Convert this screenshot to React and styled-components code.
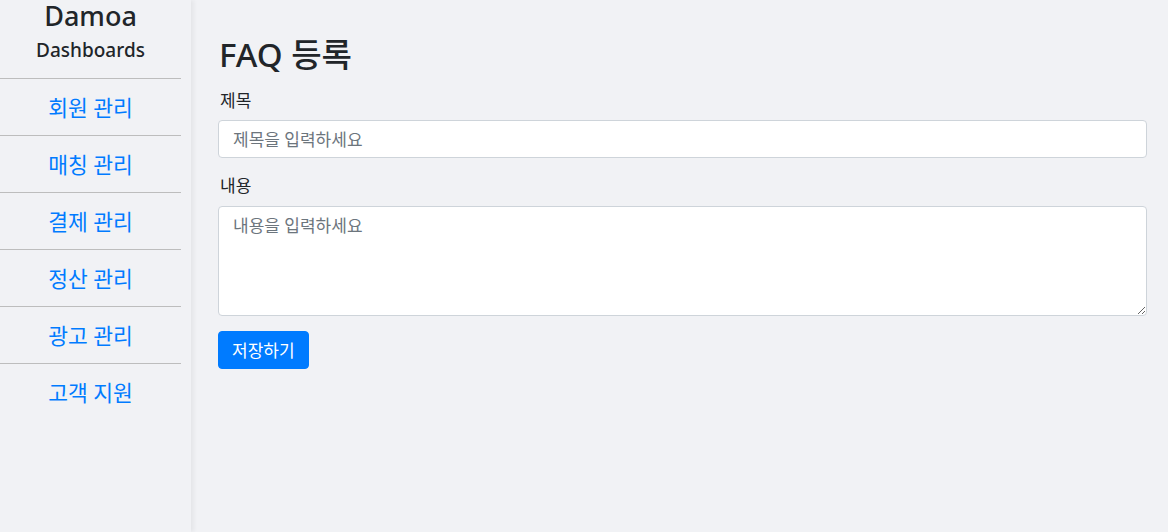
import React, { useState } from 'react';
import styled, { createGlobalStyle } from 'styled-components';

const GlobalStyle = createGlobalStyle`
    html, body {
        margin: 0;
        padding: 0;
        background-color: #f1f2f5;
        font-family: "Noto Sans", "Noto Sans CJK KR", sans-serif;
        color: #212529;
    }
    * {
        box-sizing: border-box;
    }
`;

const menu_list = ['회원 관리', '매칭 관리', '결제 관리', '정산 관리', '광고 관리', '고객 지원'];

const App = () => {
    const [title, setTitle] = useState('');
    const [contents, setContents] = useState('');

    return (
        <>
            <GlobalStyle />
            <Layout>
                <Sidebar>
                    <Brand>
                        <h2>Damoa</h2>
                        <h5>Dashboards</h5>
                    </Brand>
                    <MenuList>
                        {menu_list.map((name, idx) => (
                            <MenuItem key={name} last={idx === menu_list.length - 1}>
                                <a href="#">{name}</a>
                            </MenuItem>
                        ))}
                    </MenuList>
                </Sidebar>
                <Main>
                    <Title>FAQ 등록</Title>
                    <FormGroup>
                        <Label>제목</Label>
                        <Input
                            value={title}
                            onChange={(e) => setTitle(e.target.value)}
                            placeholder="제목을 입력하세요"
                        />
                    </FormGroup>
                    <FormGroup>
                        <Label>내용</Label>
                        <TextArea
                            value={contents}
                            onChange={(e) => setContents(e.target.value)}
                            placeholder="내용을 입력하세요"
                        />
                    </FormGroup>
                    <SaveButton>저장하기</SaveButton>
                </Main>
            </Layout>
        </>
    );
};

const Layout = styled.div`
    display: flex;
    min-height: 100vh;
`;

const Sidebar = styled.aside`
    width: 191px;
    flex-shrink: 0;
    background-color: #f1f2f5;
    box-shadow: 3px 0 4px rgba(0, 0, 0, 0.05);
    padding-right: 10px;
    position: relative;
`;

const Brand = styled.div`
    text-align: center;
    border-bottom: 1px solid #bdbdbd;
    height: 79px;
    padding-top: 1px;
    & h2 {
        margin: 0;
        font-size: 27px;
        font-weight: 500;
        line-height: 1.1;
    }
    & h5 {
        margin: 8px 0 0 0;
        font-size: 19px;
        font-weight: 500;
        line-height: 1.2;
    }
`;

const MenuList = styled.ul`
    list-style: none;
    margin: 0;
    padding: 0;
`;

const MenuItem = styled.li`
    height: 57px;
    display: flex;
    align-items: center;
    justify-content: center;
    border-bottom: ${(props) => (props.last ? 'none' : '1px solid #bdbdbd')};
    & a {
        color: #007bff;
        text-decoration: none;
        font-size: 21.5px;
        padding-bottom: 2px;
    }
`;

const Main = styled.main`
    flex: 1;
    padding: 35px 21px 0 27px;
`;

const Title = styled.h2`
    margin: 0 0 13px 0;
    font-size: 33px;
    font-weight: 500;
    line-height: 1.2;
    padding-left: 1px;
`;

const FormGroup = styled.div`
    margin-bottom: 15px;
`;

const Label = styled.label`
    display: block;
    font-size: 17px;
    line-height: 1.5;
    margin-bottom: 7px;
    padding-left: 2px;
`;

const Input = styled.input`
    display: block;
    width: 100%;
    height: 38px;
    padding: 6px 14px;
    font-family: inherit;
    font-size: 17px;
    color: #495057;
    background-color: #fff;
    border: 1px solid #ced4da;
    border-radius: 4px;
    outline: none;
    &::placeholder {
        color: #6c757d;
    }
`;

const TextArea = styled.textarea`
    display: block;
    width: 100%;
    height: 110px;
    padding: 6px 14px;
    font-family: inherit;
    font-size: 17px;
    line-height: 1.5;
    color: #495057;
    background-color: #fff;
    border: 1px solid #ced4da;
    border-radius: 4px;
    outline: none;
    resize: vertical;
    &::placeholder {
        color: #6c757d;
    }
`;

const SaveButton = styled.button`
    height: 38px;
    padding: 0 13px;
    font-family: inherit;
    font-size: 17px;
    color: #fff;
    background-color: #007bff;
    border: 1px solid #007bff;
    border-radius: 4px;
    cursor: pointer;
`;

export default App;
